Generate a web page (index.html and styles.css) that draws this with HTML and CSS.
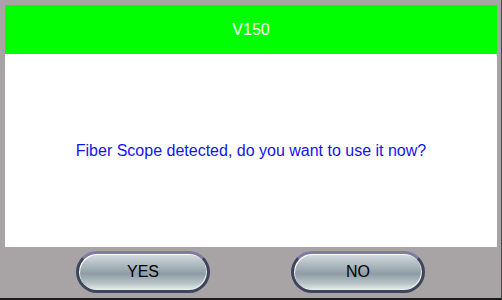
FILE: index.html
```html
<!DOCTYPE html>
<html>
<head>
<meta charset="utf-8">
<link rel="stylesheet" href="styles.css">
</head>
<body>
<div class="screen">
  <div class="title">V150</div>
  <div class="content">Fiber Scope detected, do you want to use it now?</div>
  <div class="footer">
    <button class="btn">YES</button>
    <button class="btn">NO</button>
  </div>
</div>
</body>
</html>
```

FILE: styles.css
```css
html, body {
  margin: 0;
  padding: 0;
}
.screen {
  width: 502px;
  height: 300px;
  box-sizing: border-box;
  background: #a8a4a6;
  padding: 5px 4px 0 5px;
  border-right: 1px solid #4a4a4a;
  border-bottom: 2px solid #1c1c1c;
  display: flex;
  flex-direction: column;
  font-family: "Liberation Sans", Arial, sans-serif;
  font-size: 16px;
}
.title {
  height: 49px;
  background: #00ff00;
  color: #ffffff;
  display: flex;
  align-items: center;
  justify-content: center;
}
.content {
  height: 193px;
  background: #ffffff;
  color: #1414ee;
  display: flex;
  align-items: center;
  justify-content: center;
}
.footer {
  flex: 1;
  display: flex;
  align-items: flex-start;
  padding: 4px 0 0 71px;
  gap: 81px;
}
.btn {
  width: 134px;
  height: 42px;
  box-sizing: border-box;
  border-radius: 21px;
  border: 3px solid #3e445c;
  border-top-color: #7f7ca4;
  box-shadow: inset 1px 1px 0 #ffffff, inset -1px -1px 0 #e8efee;
  background: linear-gradient(#d6dde2 0%, #aeb9c0 30%, #8f9ca6 55%, #b4c1c4 80%, #e3ecea 100%);
  color: #000000;
  font-family: "Liberation Sans", Arial, sans-serif;
  font-size: 16px;
  padding: 0;
  margin: 0;
}
```
